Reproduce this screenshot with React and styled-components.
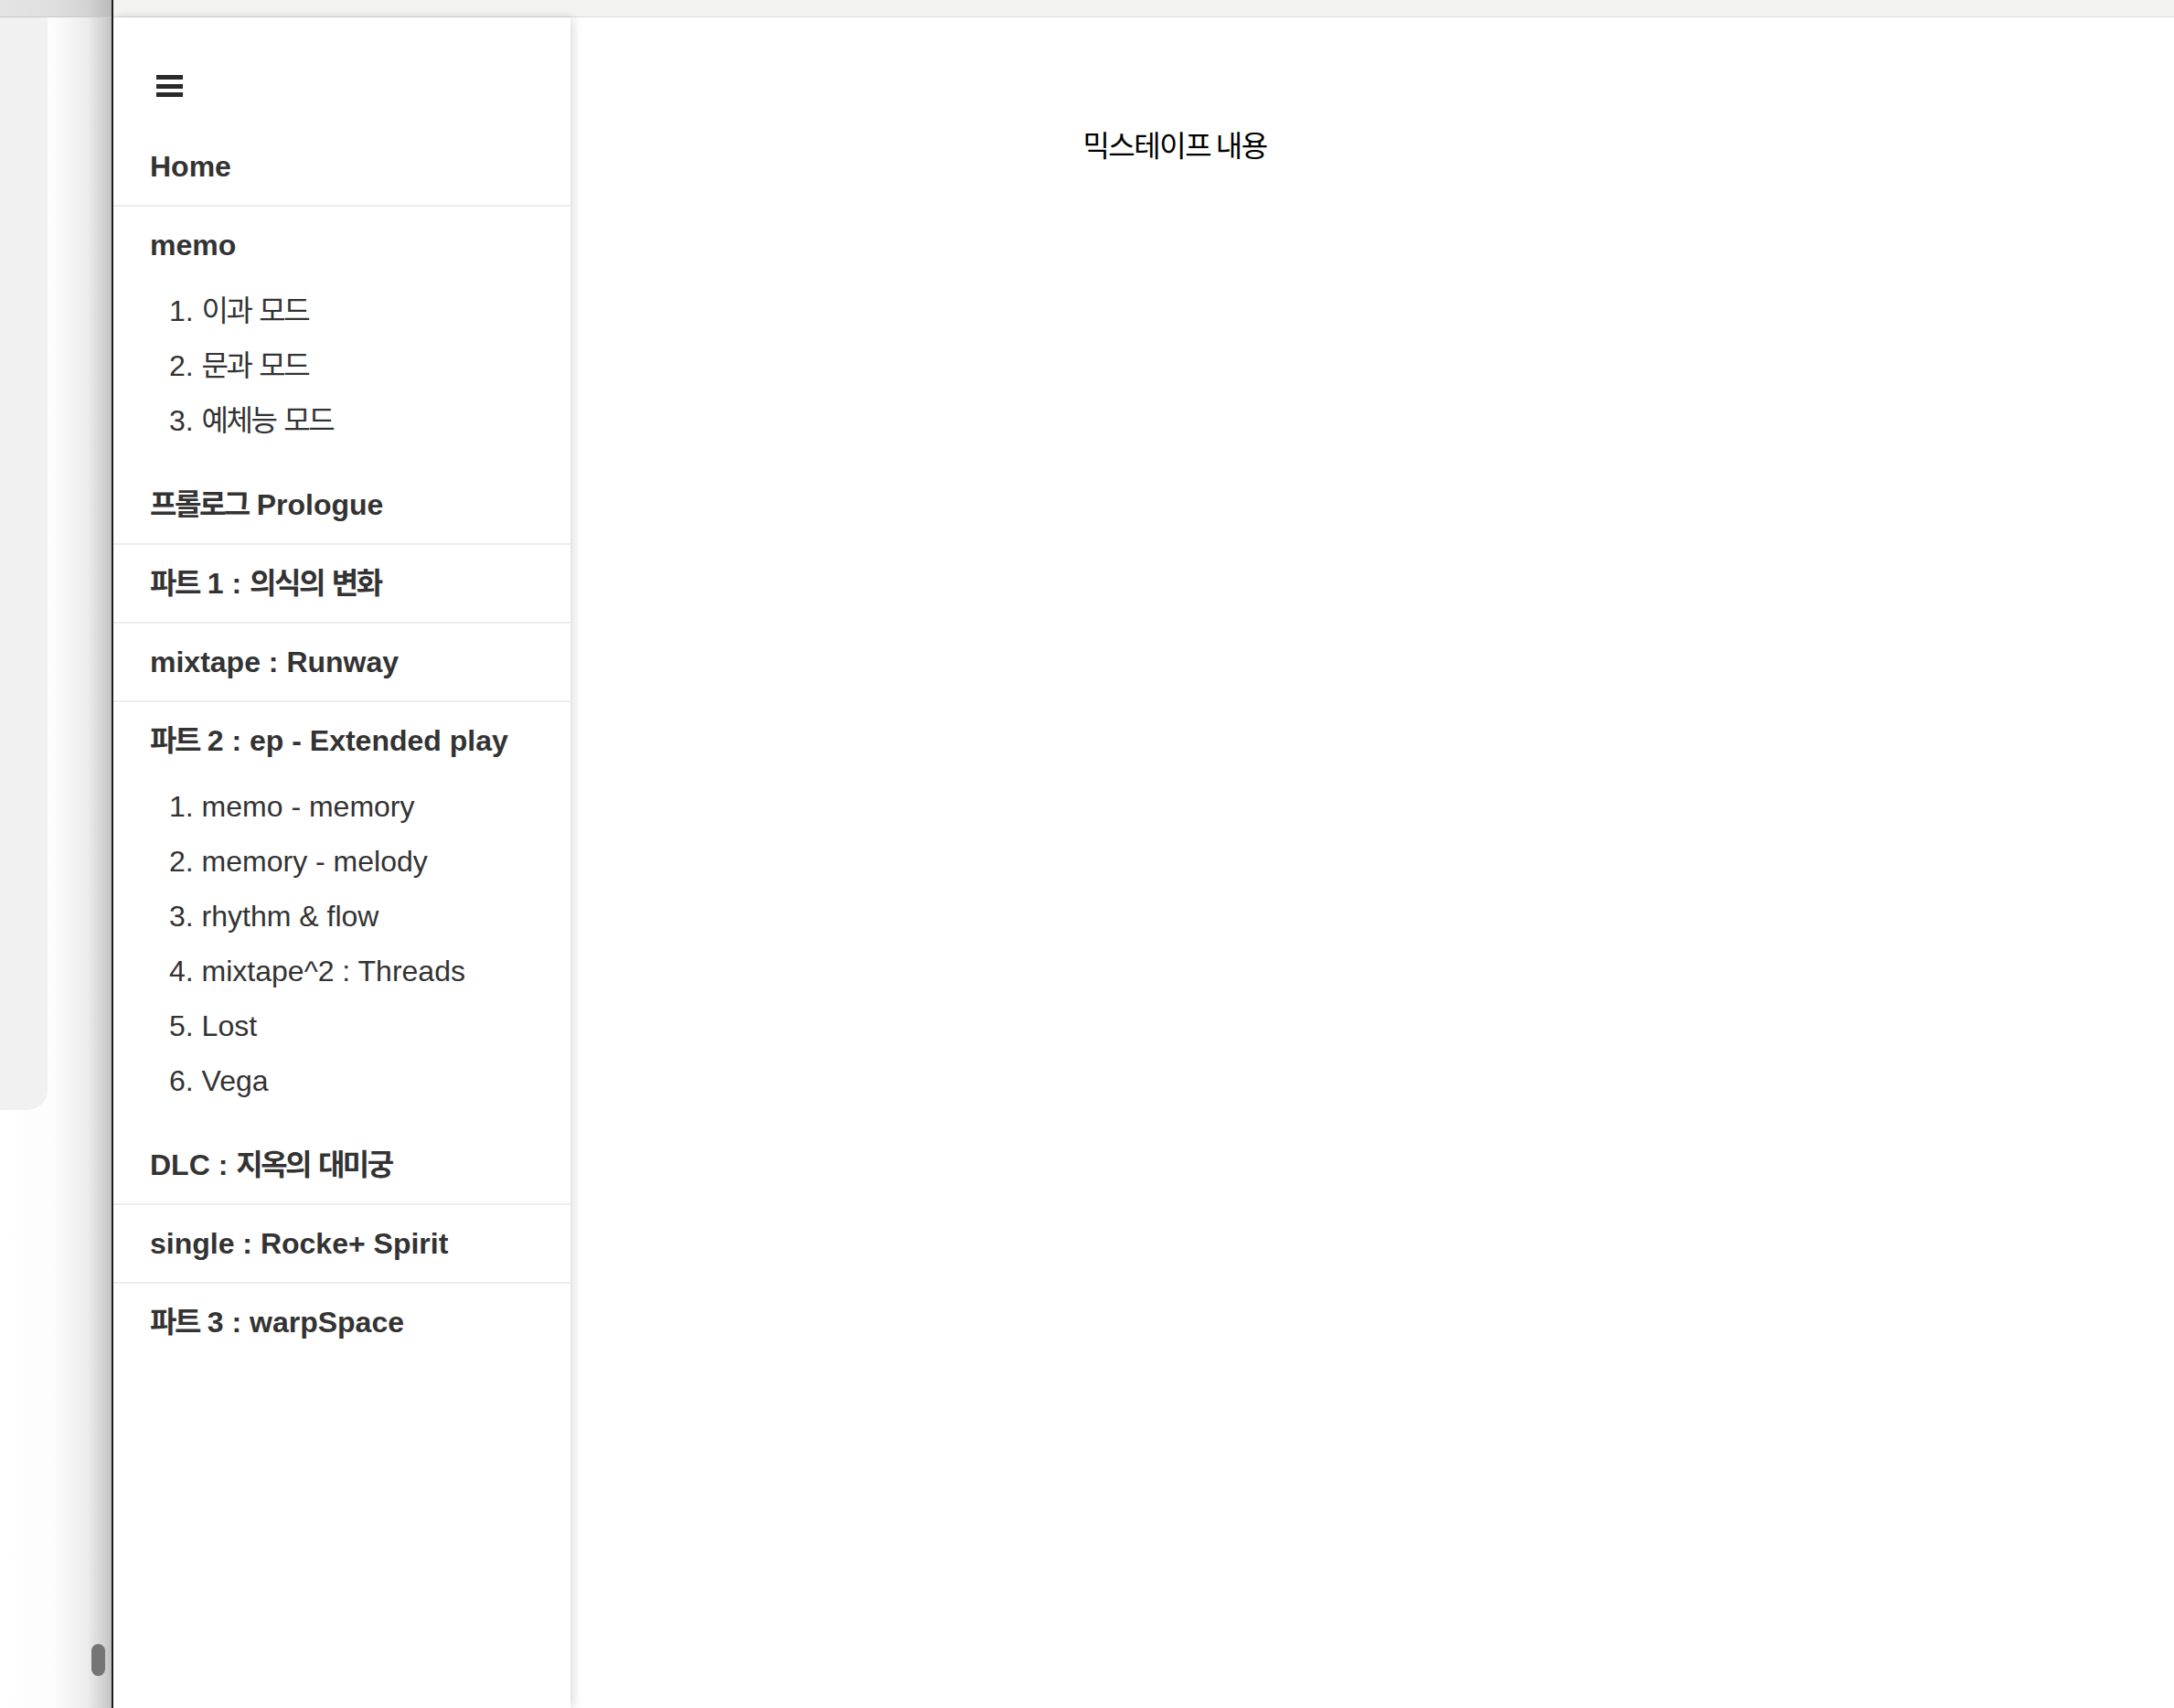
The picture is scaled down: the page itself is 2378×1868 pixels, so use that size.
import React from 'react';
import styled, { createGlobalStyle } from 'styled-components';

const GlobalStyle = createGlobalStyle`
  html, body {
    margin: 0;
    padding: 0;
    height: 100%;
  }
  body {
    font-family: 'Liberation Sans', 'Noto Sans CJK KR', sans-serif;
    background: #fff;
  }
  #root {
    height: 100%;
  }
`;

const Page = styled.div`
  display: flex;
  height: 100vh;
  overflow: hidden;
`;

/* the window peeking out behind the drawer */
const LeftStrip = styled.div`
  position: relative;
  width: 122px;
  flex-shrink: 0;
  display: flex;
  flex-direction: column;
  background: linear-gradient(to right, #ffffff 0, #fcfcfc 60px, #ececec 96px, #c4c4c4 122px);
`;

const StripTop = styled.div`
  height: 18px;
  flex-shrink: 0;
  border-bottom: 1px solid #c8c8c8;
  background: linear-gradient(to right, #e4e4e4 0, #dfdfdf 60px, #d3d3d3 96px, #bababa 122px);
`;

const StripPanel = styled.div`
  width: 52px;
  height: 1195px;
  background: #f1f1f1;
  border-bottom-right-radius: 22px;
`;

const ScrollThumb = styled.div`
  position: absolute;
  left: 100px;
  top: 1798px;
  width: 15px;
  height: 35px;
  border-radius: 8px;
  background: #757575;
`;

const Divider = styled.div`
  width: 2px;
  flex-shrink: 0;
  background: #1c1c1c;
`;

const RightPane = styled.div`
  flex: 1;
  min-width: 0;
  display: flex;
  flex-direction: column;
`;

const TopBar = styled.div`
  height: 18px;
  flex-shrink: 0;
  background: #f3f3f1;
  border-bottom: 1px solid #d9d9d7;
`;

const Body = styled.div`
  flex: 1;
  min-height: 0;
  display: flex;
`;

const Sidebar = styled.nav`
  position: relative;
  z-index: 1;
  width: 500px;
  flex-shrink: 0;
  background: #fff;
  box-shadow: 3px 0 10px rgba(0, 0, 0, 0.14);
  display: flex;
  flex-direction: column;
`;

const MenuButton = styled.button`
  margin: 63px 0 34px 47px;
  padding: 0;
  width: 29px;
  height: 24px;
  border: none;
  background: none;
  display: flex;
  flex-direction: column;
  justify-content: space-between;
  cursor: pointer;
`;

const Bar = styled.span`
  display: block;
  height: 5px;
  background: #2a2a2a;
`;

const NavList = styled.ul`
  list-style: none;
  margin: 0;
  padding: 0;
`;

const NavSection = styled.li`
  border-bottom: ${(p) => (p.$plain ? '2px solid #ededed' : 'none')};
`;

const SectionTitle = styled.div`
  padding: 24px 0 24px 40px;
  line-height: 36px;
  font-size: 32px;
  font-weight: 700;
  color: #333;
`;

const SubList = styled.ol`
  list-style: none;
  margin: 0;
  padding: 0 0 20px 61px;
`;

const SubItem = styled.li`
  line-height: 60px;
  font-size: 32px;
  color: #333;
`;

// hangul in Noto runs wider than the mac font, pull it in a bit
const Hangul = styled.span`
  letter-spacing: -2.5px;
`;

const Main = styled.main`
  flex: 1;
  background: #fff;
`;

const MainContent = styled.div`
  width: 1322px;
  padding-top: 115px;
  text-align: center;
  font-family: 'Noto Sans CJK KR', sans-serif;
  font-size: 32px;
  line-height: 46px;
  letter-spacing: -1.5px;
  color: #000;
`;

const sections = [
  { title: 'Home' },
  { title: 'memo', items: ['1. 이과 모드', '2. 문과 모드', '3. 예체능 모드'] },
  { title: '프롤로그 Prologue' },
  { title: '파트 1 : 의식의 변화' },
  { title: 'mixtape : Runway' },
  {
    title: '파트 2 : ep - Extended play',
    items: [
      '1. memo - memory',
      '2. memory - melody',
      '3. rhythm & flow',
      '4. mixtape^2 : Threads',
      '5. Lost',
      '6. Vega',
    ],
  },
  { title: 'DLC : 지옥의 대미궁' },
  { title: 'single : Rocke+ Spirit' },
  { title: '파트 3 : warpSpace' },
];

const Label = ({ text }) =>
  text.split(/([가-힣]+)/).map((part, i) =>
    /[가-힣]/.test(part) ? <Hangul key={i}>{part}</Hangul> : part
  );

const App = () => {
  return (
    <>
      <GlobalStyle />
      <Page>
        <LeftStrip>
          <StripTop />
          <StripPanel />
          <ScrollThumb />
        </LeftStrip>
        <Divider />
        <RightPane>
          <TopBar />
          <Body>
            <Sidebar>
              <MenuButton aria-label="menu">
                <Bar />
                <Bar />
                <Bar />
              </MenuButton>
              <NavList>
                {sections.map((s, i) => (
                  <NavSection key={s.title} $plain={!s.items && i < sections.length - 1}>
                    <SectionTitle>
                      <Label text={s.title} />
                    </SectionTitle>
                    {s.items && (
                      <SubList>
                        {s.items.map((it) => (
                          <SubItem key={it}>
                            <Label text={it} />
                          </SubItem>
                        ))}
                      </SubList>
                    )}
                  </NavSection>
                ))}
              </NavList>
            </Sidebar>
            <Main>
              <MainContent>믹스테이프 내용</MainContent>
            </Main>
          </Body>
        </RightPane>
      </Page>
    </>
  );
};

export default App;
